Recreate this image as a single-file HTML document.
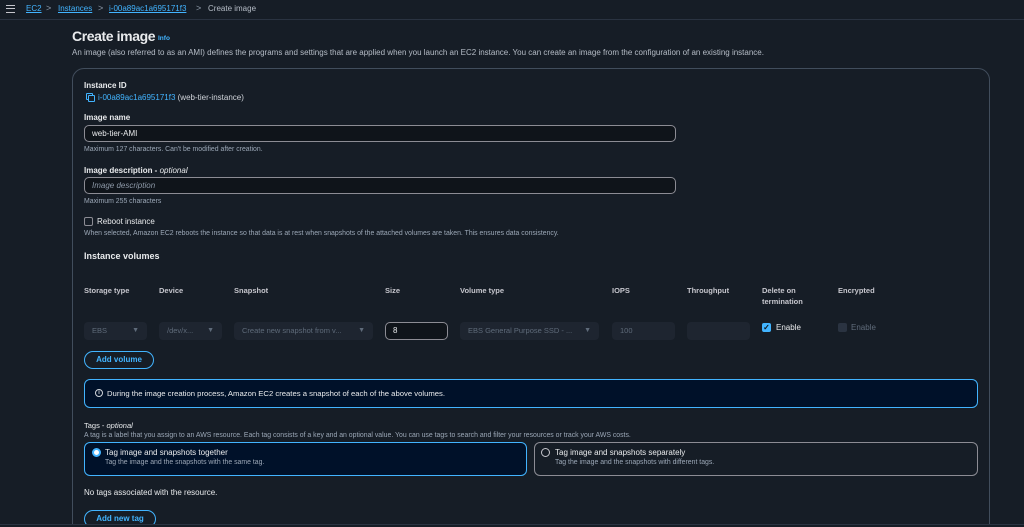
<!DOCTYPE html>
<html style="width:1024px;height:527px;overflow:hidden"><head><meta charset="utf-8"><style>
*{box-sizing:border-box;margin:0;padding:0}
body{width:1024px;height:527px;overflow:hidden;background:#161d26;font-family:"Liberation Sans",sans-serif;color:#d1d5db;position:relative;font-size:8px}
.a{position:absolute;white-space:nowrap}
.top{position:absolute;left:0;top:0;width:1024px;height:20px;border-bottom:1px solid #2a3341;background:#161d26}
.link{color:#42b4ff;text-decoration:underline}
.lbl{font-weight:bold;color:#e9ebed;font-size:8px}
.hint{color:#9ba7b6;font-size:6.9px}
.inp{position:absolute;border:1px solid #8c8c94;border-radius:5px;height:17px;color:#e9ebed;font-size:8px;padding:3px 7px;background:#0f141a}
.sel{position:absolute;top:322px;height:18px;background:#1e2530;border-radius:4px;color:#5f6b7a;font-size:7.5px;padding:4px 8px}
.sel .ar{position:absolute;right:8px;top:5px;font-size:7px;color:#5f6b7a}
.btn{position:absolute;border:1.5px solid #42b4ff;border-radius:10px;color:#42b4ff;font-weight:bold;font-size:8px;text-align:center;padding-top:3px;height:18px}
.th{position:absolute;top:285px;font-weight:bold;font-size:7.5px;color:#c6c6cd;line-height:11px}
</style></head><body>
<div class="top"></div>
<div class="a" style="left:6px;top:5px;width:9px;height:8px;border-top:1.5px solid #c6c6cd;border-bottom:1.5px solid #c6c6cd"><div style="margin-top:2px;border-top:1.5px solid #c6c6cd"></div></div>
<div class="a link" style="left:26px;top:4px;font-size:8px">EC2</div>
<div class="a" style="left:46px;top:3px;color:#8d99a8;font-size:9px">&gt;</div>
<div class="a link" style="left:58px;top:4px;font-size:8px">Instances</div>
<div class="a" style="left:98px;top:3px;color:#8d99a8;font-size:9px">&gt;</div>
<div class="a link" style="left:109px;top:4px;font-size:8px">i-00a89ac1a695171f3</div>
<div class="a" style="left:196px;top:3px;color:#8d99a8;font-size:9px">&gt;</div>
<div class="a" style="left:208px;top:4px;font-size:8px;color:#b5bcc6">Create image</div>

<div class="a" style="left:72px;top:28px;font-size:14px;font-weight:bold;color:#e9ebed;letter-spacing:-0.4px">Create image</div>
<div class="a" style="left:158px;top:35px;font-size:6.5px;font-weight:bold;color:#42b4ff">Info</div>
<div class="a" style="left:72px;top:48px;font-size:8px;color:#b5bcc6">An image (also referred to as an AMI) defines the programs and settings that are applied when you launch an EC2 instance. You can create an image from the configuration of an existing instance.</div>

<div class="a" style="left:72px;top:68px;width:918px;height:480px;border:1px solid #414d5c;border-radius:12px"></div>

<div class="a lbl" style="left:84px;top:81px">Instance ID</div>
<div class="a" style="left:86px;top:93px;width:7px;height:7px;border:1.2px solid #42b4ff;border-radius:1px"></div>
<div class="a" style="left:88px;top:95px;width:7px;height:7px;border:1.2px solid #42b4ff;border-radius:1px;background:#161d26"></div>
<div class="a" style="left:98px;top:93px;font-size:8px"><span style="color:#42b4ff">i-00a89ac1a695171f3</span> <span style="color:#d1d5db">(web-tier-instance)</span></div>

<div class="a lbl" style="left:84px;top:113px">Image name</div>
<div class="inp" style="left:84px;top:125px;width:592px">web-tier-AMI</div>
<div class="a hint" style="left:84px;top:146px">Maximum 127 characters. Can't be modified after creation.</div>

<div class="a lbl" style="left:84px;top:166px">Image description - <i style="font-weight:normal">optional</i></div>
<div class="inp" style="left:84px;top:177px;width:592px;color:#8d99a8;font-style:italic">Image description</div>
<div class="a hint" style="left:84px;top:198px">Maximum 255 characters</div>

<div class="a" style="left:84px;top:217px;width:9px;height:9px;border:1.2px solid #8c8c94;border-radius:2px"></div>
<div class="a" style="left:97px;top:217px;font-size:8px;color:#e9ebed">Reboot instance</div>
<div class="a hint" style="left:84px;top:230px">When selected, Amazon EC2 reboots the instance so that data is at rest when snapshots of the attached volumes are taken. This ensures data consistency.</div>

<div class="a" style="left:84px;top:251px;font-size:9px;font-weight:bold;color:#e9ebed">Instance volumes</div>

<div class="th" style="left:84px">Storage type</div>
<div class="th" style="left:159px">Device</div>
<div class="th" style="left:234px">Snapshot</div>
<div class="th" style="left:385px">Size</div>
<div class="th" style="left:460px">Volume type</div>
<div class="th" style="left:612px">IOPS</div>
<div class="th" style="left:687px">Throughput</div>
<div class="th" style="left:762px">Delete on<br>termination</div>
<div class="th" style="left:838px">Encrypted</div>

<div class="sel" style="left:84px;width:63px">EBS<span class="ar">▼</span></div>
<div class="sel" style="left:159px;width:63px">/dev/x...<span class="ar">▼</span></div>
<div class="sel" style="left:234px;width:139px">Create new snapshot from v...<span class="ar">▼</span></div>
<div class="inp" style="left:385px;top:322px;width:63px;height:18px">8</div>
<div class="sel" style="left:460px;width:139px">EBS General Purpose SSD - ...<span class="ar">▼</span></div>
<div class="sel" style="left:612px;width:63px">100</div>
<div class="sel" style="left:687px;width:63px"></div>
<div class="a" style="left:762px;top:323px;width:9px;height:9px;background:#42b4ff;border-radius:2px;color:#0f141a;font-size:8px;line-height:9px;text-align:center;font-weight:bold">✓</div>
<div class="a" style="left:776px;top:323px;font-size:8px;color:#e9ebed">Enable</div>
<div class="a" style="left:838px;top:323px;width:9px;height:9px;background:#2a3341;border-radius:2px"></div>
<div class="a" style="left:851px;top:323px;font-size:8px;color:#5f6b7a">Enable</div>

<div class="btn" style="left:84px;top:351px;width:70px">Add volume</div>

<div class="a" style="left:84px;top:379px;width:894px;height:29px;border:1.5px solid #42b4ff;border-radius:6px;background:#001129"></div>
<div class="a" style="left:95px;top:389px;width:8px;height:8px;border:1px solid #d1d5db;border-radius:50%;font-size:5.5px;text-align:center;line-height:6px;color:#d1d5db;font-weight:bold">i</div>
<div class="a" style="left:107px;top:389px;font-size:7.7px;color:#e9ebed">During the image creation process, Amazon EC2 creates a snapshot of each of the above volumes.</div>

<div class="a" style="left:84px;top:421px;font-size:7.5px;color:#e9ebed">Tags - <i>optional</i></div>
<div class="a hint" style="left:84px;top:432px">A tag is a label that you assign to an AWS resource. Each tag consists of a key and an optional value. You can use tags to search and filter your resources or track your AWS costs.</div>

<div class="a" style="left:84px;top:442px;width:443px;height:34px;border:1.5px solid #42b4ff;border-radius:6px;background:#001129"></div>
<div class="a" style="left:92px;top:448px;width:9px;height:9px;border:2.5px solid #42b4ff;border-radius:50%;background:#fff"></div>
<div class="a" style="left:105px;top:448px;font-size:8px;color:#e9ebed">Tag image and snapshots together</div>
<div class="a hint" style="left:105px;top:459px">Tag the image and the snapshots with the same tag.</div>

<div class="a" style="left:534px;top:442px;width:444px;height:34px;border:1px solid #8c8c94;border-radius:6px"></div>
<div class="a" style="left:541px;top:448px;width:9px;height:9px;border:1.2px solid #c6c6cd;border-radius:50%"></div>
<div class="a" style="left:555px;top:448px;font-size:8px;color:#e9ebed">Tag image and snapshots separately</div>
<div class="a hint" style="left:555px;top:459px">Tag the image and the snapshots with different tags.</div>

<div class="a" style="left:84px;top:488px;font-size:8px;color:#e9ebed">No tags associated with the resource.</div>
<div class="btn" style="left:84px;top:510px;width:72px">Add new tag</div>
<div class="a" style="left:0;top:524px;width:1024px;height:3px;background:#161d26;border-top:1px solid #2a3341"></div>
</body></html>
